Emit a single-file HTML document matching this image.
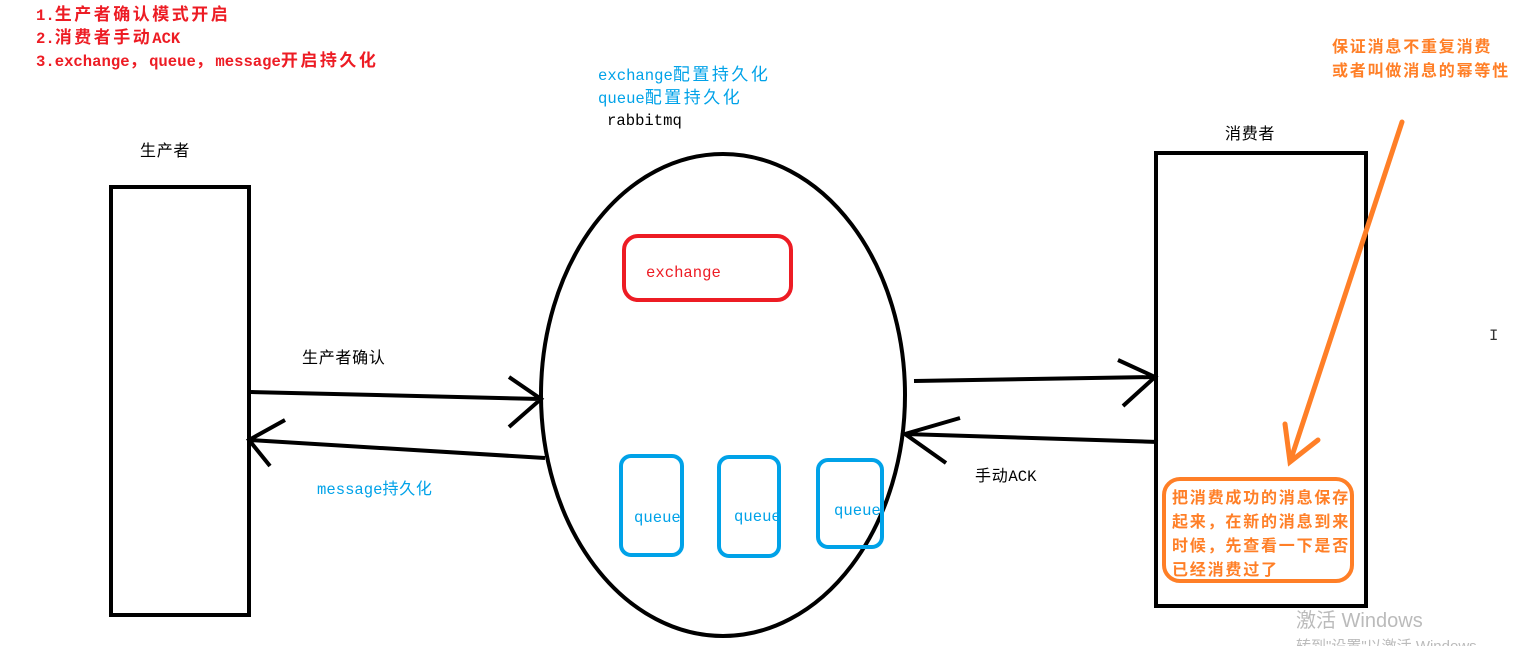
<!DOCTYPE html>
<html><head><meta charset="utf-8"><style>
html,body{margin:0;padding:0;background:#fff;width:1534px;height:646px;overflow:hidden}
svg text{font-family:"Liberation Mono","Noto Sans CJK SC",monospace;font-size:15.6px}
.c{font-family:"Noto Sans CJK SC",sans-serif;font-size:17px;letter-spacing:2.5px}
.d{font-family:"Noto Sans CJK SC",sans-serif;font-size:16px;letter-spacing:0.7px}
.o{font-family:"Noto Sans CJK SC",sans-serif;font-size:16px;letter-spacing:1.8px;font-weight:bold}
</style></head><body>
<svg width="1534" height="646" viewBox="0 0 1534 646" xmlns="http://www.w3.org/2000/svg">
<g fill="#ed1c24" font-weight="bold">
<text x="36" y="20">1.<tspan class="c">生产者确认模式开启</tspan></text>
<text x="36" y="43">2.<tspan class="c">消费者手动</tspan>ACK</text>
<text x="36" y="66">3.exchange<tspan class="c">，</tspan>queue<tspan class="c">，</tspan>message<tspan class="c">开启持久化</tspan></text>
</g>
<g fill="#00a2e8">
<text x="598" y="80">exchange<tspan class="c">配置持久化</tspan></text>
<text x="598" y="103">queue<tspan class="c">配置持久化</tspan></text>
</g>
<text x="607" y="125" fill="#000">rabbitmq</text>
<text x="140" y="156" class="d" fill="#000">生产者</text>
<text x="1225" y="139" class="d" fill="#000">消费者</text>
<text x="302" y="363" class="d" fill="#000">生产者确认</text>
<text x="975" y="481" fill="#000"><tspan class="d">手动</tspan>ACK</text>
<text x="317" y="494" fill="#00a2e8">message<tspan class="d">持久化</tspan></text>
<g fill="#ff7f27">
<text class="o" x="1332" y="52">保证消息不重复消费</text>
<text class="o" x="1332" y="76">或者叫做消息的幂等性</text>
<text class="o" x="1172" y="503">把消费成功的消息保存</text>
<text class="o" x="1172" y="527">起来，在新的消息到来</text>
<text class="o" x="1172" y="551">时候，先查看一下是否</text>
<text class="o" x="1172" y="575">已经消费过了</text>
</g>
<g fill="none" stroke="#000" stroke-width="4">
<rect x="111" y="187" width="138" height="428"/>
<rect x="1156" y="153" width="210" height="453"/>
<ellipse cx="723" cy="395" rx="182" ry="241"/>
<path d="M251 392 L541 399 M509 377 L541 399 L509 427"/>
<path d="M545 458 L249 440 M285 420 L249 440 L270 466"/>
<path d="M914 381 L1155 377 M1118 360 L1155 377 L1123 406"/>
<path d="M1158 442 L905 434 M960 418 L905 434 L946 463"/>
</g>
<rect x="624" y="236" width="167" height="64" rx="14" fill="none" stroke="#ed1c24" stroke-width="4"/>
<text x="646" y="277" font-size="14" fill="#ed1c24">exchange</text>
<g fill="none" stroke="#00a2e8" stroke-width="4">
<rect x="621" y="456" width="61" height="99" rx="10"/>
<rect x="719" y="457" width="60" height="99" rx="10"/>
<rect x="818" y="460" width="64" height="87" rx="10"/>
</g>
<g fill="#00a2e8">
<text x="634" y="522">queue</text>
<text x="734" y="521">queue</text>
<text x="834" y="515">queue</text>
</g>
<rect x="1164" y="479" width="188" height="102" rx="16" fill="none" stroke="#ff7f27" stroke-width="4"/>
<g fill="none" stroke="#ff7f27" stroke-width="5" stroke-linecap="round">
<path d="M1402 122 L1290 462 M1285 424 L1290 462 L1318 440"/>
</g>
<text x="1489" y="340" fill="#333">I</text>
<text x="1296" y="627" style="font-family:'Liberation Sans','Noto Sans CJK SC',sans-serif;font-size:20px" fill="#bbb">激活 Windows</text>
<text x="1296" y="651" style="font-family:'Liberation Sans','Noto Sans CJK SC',sans-serif;font-size:15px" fill="#bbb">转到"设置"以激活 Windows</text>
</svg>
</body></html>
